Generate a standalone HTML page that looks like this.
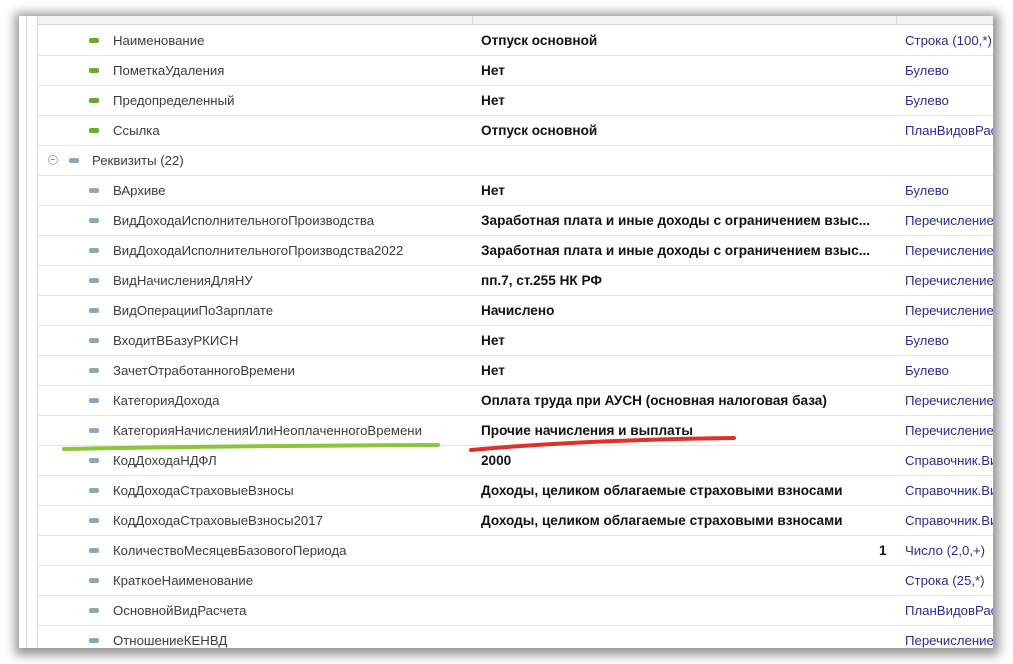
<!DOCTYPE html>
<html><head><meta charset="utf-8">
<style>
*{margin:0;padding:0;box-sizing:border-box}
html,body{width:1013px;height:664px;overflow:hidden;background:#fff;position:relative}
.win{position:absolute;left:19px;top:16px;width:974px;height:632px;background:#fff;overflow:hidden;
 box-shadow:1px 2px 10px 5px rgba(0,0,0,.42)}
.vl{position:absolute;top:0;bottom:0;width:1px;background:#d8d8d8}
.hdr{position:absolute;left:19px;top:0;right:0;height:9px;background:#f3f3f3;border-bottom:1px solid #d6d6d6}
.hsep{position:absolute;top:0;height:9px;width:1px;background:#d6d6d6}
.row{position:absolute;left:19px;right:0;height:30px;border-bottom:1px solid #e6e6e6;
 font:13.2px "Liberation Sans",Arial,sans-serif;white-space:nowrap}
.row span{position:absolute;top:7px}
.n{left:75px;color:#3c3c3c}
.v{left:443px;color:#111;font-weight:bold;font-size:13.6px}
.t{left:867px;color:#2c2c8c}
.ic{position:absolute;left:51px;top:12px;width:10px;height:5px;border-radius:2px;background:#8fa6b8}
.g .ic{background:#6aaa2a}
</style></head><body>
<div class="win">
 <div class="vl" style="left:7px"></div>
 <div class="vl" style="left:18px"></div>
 <div class="hdr"></div>
 <div class="hsep" style="left:453px"></div>
 <div class="hsep" style="left:877px"></div>

 <div class="row g" style="top:10px"><i class="ic"></i><span class="n">Наименование</span><span class="v">Отпуск основной</span><span class="t">Строка (100,*)</span></div>
 <div class="row g" style="top:40px"><i class="ic"></i><span class="n">ПометкаУдаления</span><span class="v">Нет</span><span class="t">Булево</span></div>
 <div class="row g" style="top:70px"><i class="ic"></i><span class="n">Предопределенный</span><span class="v">Нет</span><span class="t">Булево</span></div>
 <div class="row g" style="top:100px"><i class="ic"></i><span class="n">Ссылка</span><span class="v">Отпуск основной</span><span class="t">ПланВидовРасчета</span></div>
 <div class="row" style="top:130px">
  <span style="left:10px;top:9px;width:10px;height:10px;border:1px solid #aaa;border-radius:50%;"></span>
  <span style="left:13px;top:13px;width:4px;height:1px;background:#888"></span>
  <i class="ic" style="left:31px"></i><span class="n" style="left:54px">Реквизиты (22)</span></div>
 <div class="row" style="top:160px"><i class="ic"></i><span class="n">ВАрхиве</span><span class="v">Нет</span><span class="t">Булево</span></div>
 <div class="row" style="top:190px"><i class="ic"></i><span class="n">ВидДоходаИсполнительногоПроизводства</span><span class="v">Заработная плата и иные доходы с ограничением взыс...</span><span class="t">Перечисление</span></div>
 <div class="row" style="top:220px"><i class="ic"></i><span class="n">ВидДоходаИсполнительногоПроизводства2022</span><span class="v">Заработная плата и иные доходы с ограничением взыс...</span><span class="t">Перечисление</span></div>
 <div class="row" style="top:250px"><i class="ic"></i><span class="n">ВидНачисленияДляНУ</span><span class="v">пп.7, ст.255 НК РФ</span><span class="t">Перечисление</span></div>
 <div class="row" style="top:280px"><i class="ic"></i><span class="n">ВидОперацииПоЗарплате</span><span class="v">Начислено</span><span class="t">Перечисление</span></div>
 <div class="row" style="top:310px"><i class="ic"></i><span class="n">ВходитВБазуРКИСН</span><span class="v">Нет</span><span class="t">Булево</span></div>
 <div class="row" style="top:340px"><i class="ic"></i><span class="n">ЗачетОтработанногоВремени</span><span class="v">Нет</span><span class="t">Булево</span></div>
 <div class="row" style="top:370px"><i class="ic"></i><span class="n">КатегорияДохода</span><span class="v">Оплата труда при АУСН (основная налоговая база)</span><span class="t">Перечисление</span></div>
 <div class="row" style="top:400px"><i class="ic"></i><span class="n">КатегорияНачисленияИлиНеоплаченногоВремени</span><span class="v">Прочие начисления и выплаты</span><span class="t">Перечисление</span></div>
 <div class="row" style="top:430px"><i class="ic"></i><span class="n">КодДоходаНДФЛ</span><span class="v">2000</span><span class="t">Справочник.ВидыДоходов</span></div>
 <div class="row" style="top:460px"><i class="ic"></i><span class="n">КодДоходаСтраховыеВзносы</span><span class="v">Доходы, целиком облагаемые страховыми взносами</span><span class="t">Справочник.ВидыДоходов</span></div>
 <div class="row" style="top:490px"><i class="ic"></i><span class="n">КодДоходаСтраховыеВзносы2017</span><span class="v">Доходы, целиком облагаемые страховыми взносами</span><span class="t">Справочник.ВидыДоходов</span></div>
 <div class="row" style="top:520px"><i class="ic"></i><span class="n">КоличествоМесяцевБазовогоПериода</span><span class="v" style="left:841px">1</span><span class="t">Число (2,0,+)</span></div>
 <div class="row" style="top:550px"><i class="ic"></i><span class="n">КраткоеНаименование</span><span class="t">Строка (25,*)</span></div>
 <div class="row" style="top:580px"><i class="ic"></i><span class="n">ОсновнойВидРасчета</span><span class="t">ПланВидовРасчета</span></div>
 <div class="row" style="top:610px"><i class="ic"></i><span class="n">ОтношениеКЕНВД</span><span class="t">Перечисление</span></div>

 <svg style="position:absolute;left:0;top:0" width="974" height="632">
  <path d="M45 433 Q200 430 419 429" stroke="#8cc43c" stroke-width="4" fill="none" stroke-linecap="round"/>
  <path d="M452 434 Q560 424 715 422" stroke="#e0302a" stroke-width="4" fill="none" stroke-linecap="round"/>
 </svg>
</div>
</body></html>
